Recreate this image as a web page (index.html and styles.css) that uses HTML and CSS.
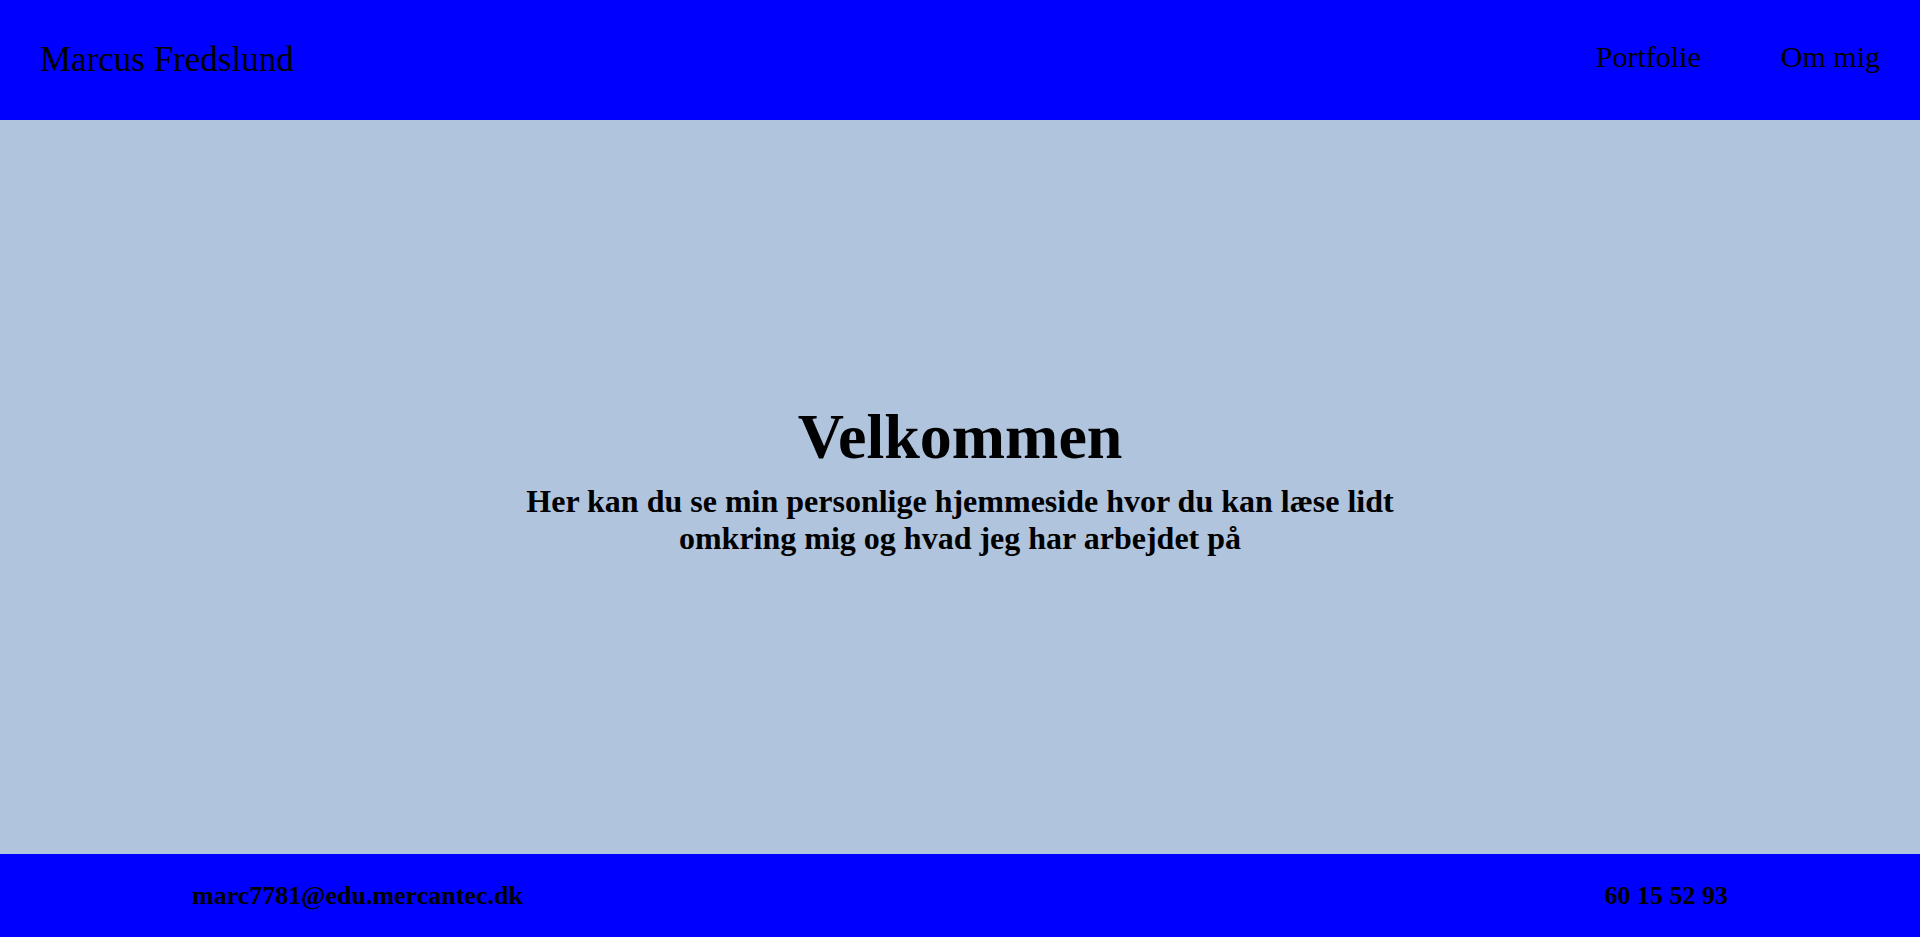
FILE: index.html
```html
<!DOCTYPE html>
<html lang="da">
<head>
<meta charset="utf-8">
<title>Marcus Fredslund</title>
<link rel="stylesheet" href="styles.css">
</head>
<body>
<header class="site-header">
  <div class="brand">Marcus Fredslund</div>
  <nav class="nav">
    <a class="nav-link" href="#">Portfolie</a>
    <a class="nav-link" href="#">Om mig</a>
  </nav>
</header>
<main class="hero">
  <h1 class="hero-title">Velkommen</h1>
  <p class="hero-text">Her kan du se min personlige hjemmeside hvor du kan læse lidt omkring mig og hvad jeg har arbejdet på</p>
</main>
<footer class="site-footer">
  <span class="contact">marc7781@edu.mercantec.dk</span>
  <span class="contact">60 15 52 93</span>
</footer>
</body>
</html>
```
FILE: styles.css
```css
html, body {
  margin: 0;
  padding: 0;
}
body {
  font-family: "Liberation Serif", "Times New Roman", serif;
  color: #000;
  display: flex;
  flex-direction: column;
  height: 100vh;
  background: #b0c4de;
}
.site-header {
  background: #0000ff;
  height: 120px;
  box-sizing: border-box;
  padding: 40px 40px 0 40px;
  display: flex;
  justify-content: space-between;
  align-items: flex-start;
  flex-shrink: 0;
}
.brand {
  font-size: 35px;
  line-height: normal;
}
.nav {
  display: flex;
  gap: 80px;
  padding-top: 0;
}
.nav-link {
  font-size: 30px;
  color: #000;
  text-decoration: none;
  line-height: normal;
}
.hero {
  flex: 1;
  display: flex;
  flex-direction: column;
  align-items: center;
  justify-content: center;
  padding-bottom: 18px;
  text-align: center;
}
.hero-title {
  font-size: 64px;
  font-weight: bold;
  margin: 0 0 9px 0;
  line-height: normal;
}
.hero-text {
  font-size: 32px;
  font-weight: bold;
  margin: 0;
  max-width: 50%;
  line-height: normal;
}
.site-footer {
  background: #0000ff;
  height: 83px;
  box-sizing: border-box;
  padding: 27px 192px 0 192px;
  display: flex;
  justify-content: space-between;
  align-items: flex-start;
  flex-shrink: 0;
}
.contact {
  font-size: 26px;
  font-weight: bold;
  line-height: normal;
}
```
